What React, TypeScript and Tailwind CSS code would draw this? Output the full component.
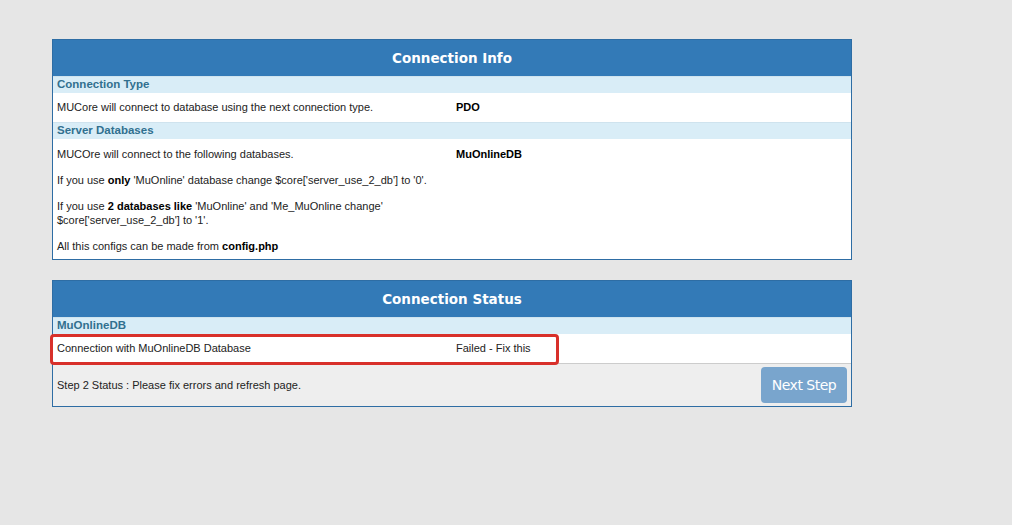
const Panel = ({ title, children }: { title: string; children: React.ReactNode }) => (
  <div className="w-[800px] border border-[#2e6da4] bg-white">
    <div className="h-[36px] bg-[#337ab7] flex items-center justify-center text-white font-bold text-[13.5px] font-['DejaVu_Sans',sans-serif]">
      {title}
    </div>
    {children}
  </div>
);

const SubHead = ({ children }: { children: React.ReactNode }) => (
  <div className="h-[17px] bg-[#d9edf7] border-t border-[#cfe3ee] px-[4px] flex items-center font-bold text-[11.5px] text-[#31708f]">
    {children}
  </div>
);

export default function App() {
  return (
    <div className="min-h-[525px] w-full bg-[#e6e6e6] pt-[39px] pl-[52px] font-['Liberation_Sans',Arial,sans-serif] text-[11px] text-[#222]">
      <Panel title="Connection Info">
        <SubHead>Connection Type</SubHead>
        <div className="grid grid-cols-2 h-[29px] items-center">
          <div className="px-[4px]">MUCore will connect to database using the next connection type.</div>
          <div className="px-[4px] font-bold text-black">PDO</div>
        </div>
        <SubHead>Server Databases</SubHead>
        <div className="grid grid-cols-2 pt-[8px] pb-[6px] leading-[14px]">
          <div className="px-[4px] flex flex-col gap-[12px]">
            <p>MUCOre will connect to the following databases.</p>
            <p>
              If you use <b className="text-black">only</b> 'MuOnline' database change $core['server_use_2_db'] to '0'.
            </p>
            <p>
              If you use <b className="text-black">2 databases like</b> 'MuOnline' and 'Me_MuOnline change'
              <br />
              $core['server_use_2_db'] to '1'.
            </p>
            <p>
              All this configs can be made from <b className="text-black">config.php</b>
            </p>
          </div>
          <div className="px-[4px] font-bold text-black">MuOnlineDB</div>
        </div>
      </Panel>

      <div className="h-[20px]" />

      <Panel title="Connection Status">
        <SubHead>MuOnlineDB</SubHead>
        <div className="relative grid grid-cols-2 h-[29px] items-center">
          <div className="px-[4px]">Connection with MuOnlineDB Database</div>
          <div className="px-[4px]">Failed - Fix this</div>
          <div className="absolute left-[-3px] top-[0px] w-[509px] h-[31px] border-[3px] border-[#d8302a] rounded-[4px]" />
        </div>
        <div className="h-[43px] bg-[#eeeeee] border-t border-[#cccccc] flex items-center justify-between pl-[4px] pr-[4px]">
          <span>Step 2 Status : Please fix errors and refresh page.</span>
          <button className="w-[86px] h-[36px] rounded-[4px] bg-[#79a5cd] text-white text-[14px] font-['DejaVu_Sans',sans-serif] tracking-[-0.5px]">
            Next Step
          </button>
        </div>
      </Panel>
    </div>
  );
}
